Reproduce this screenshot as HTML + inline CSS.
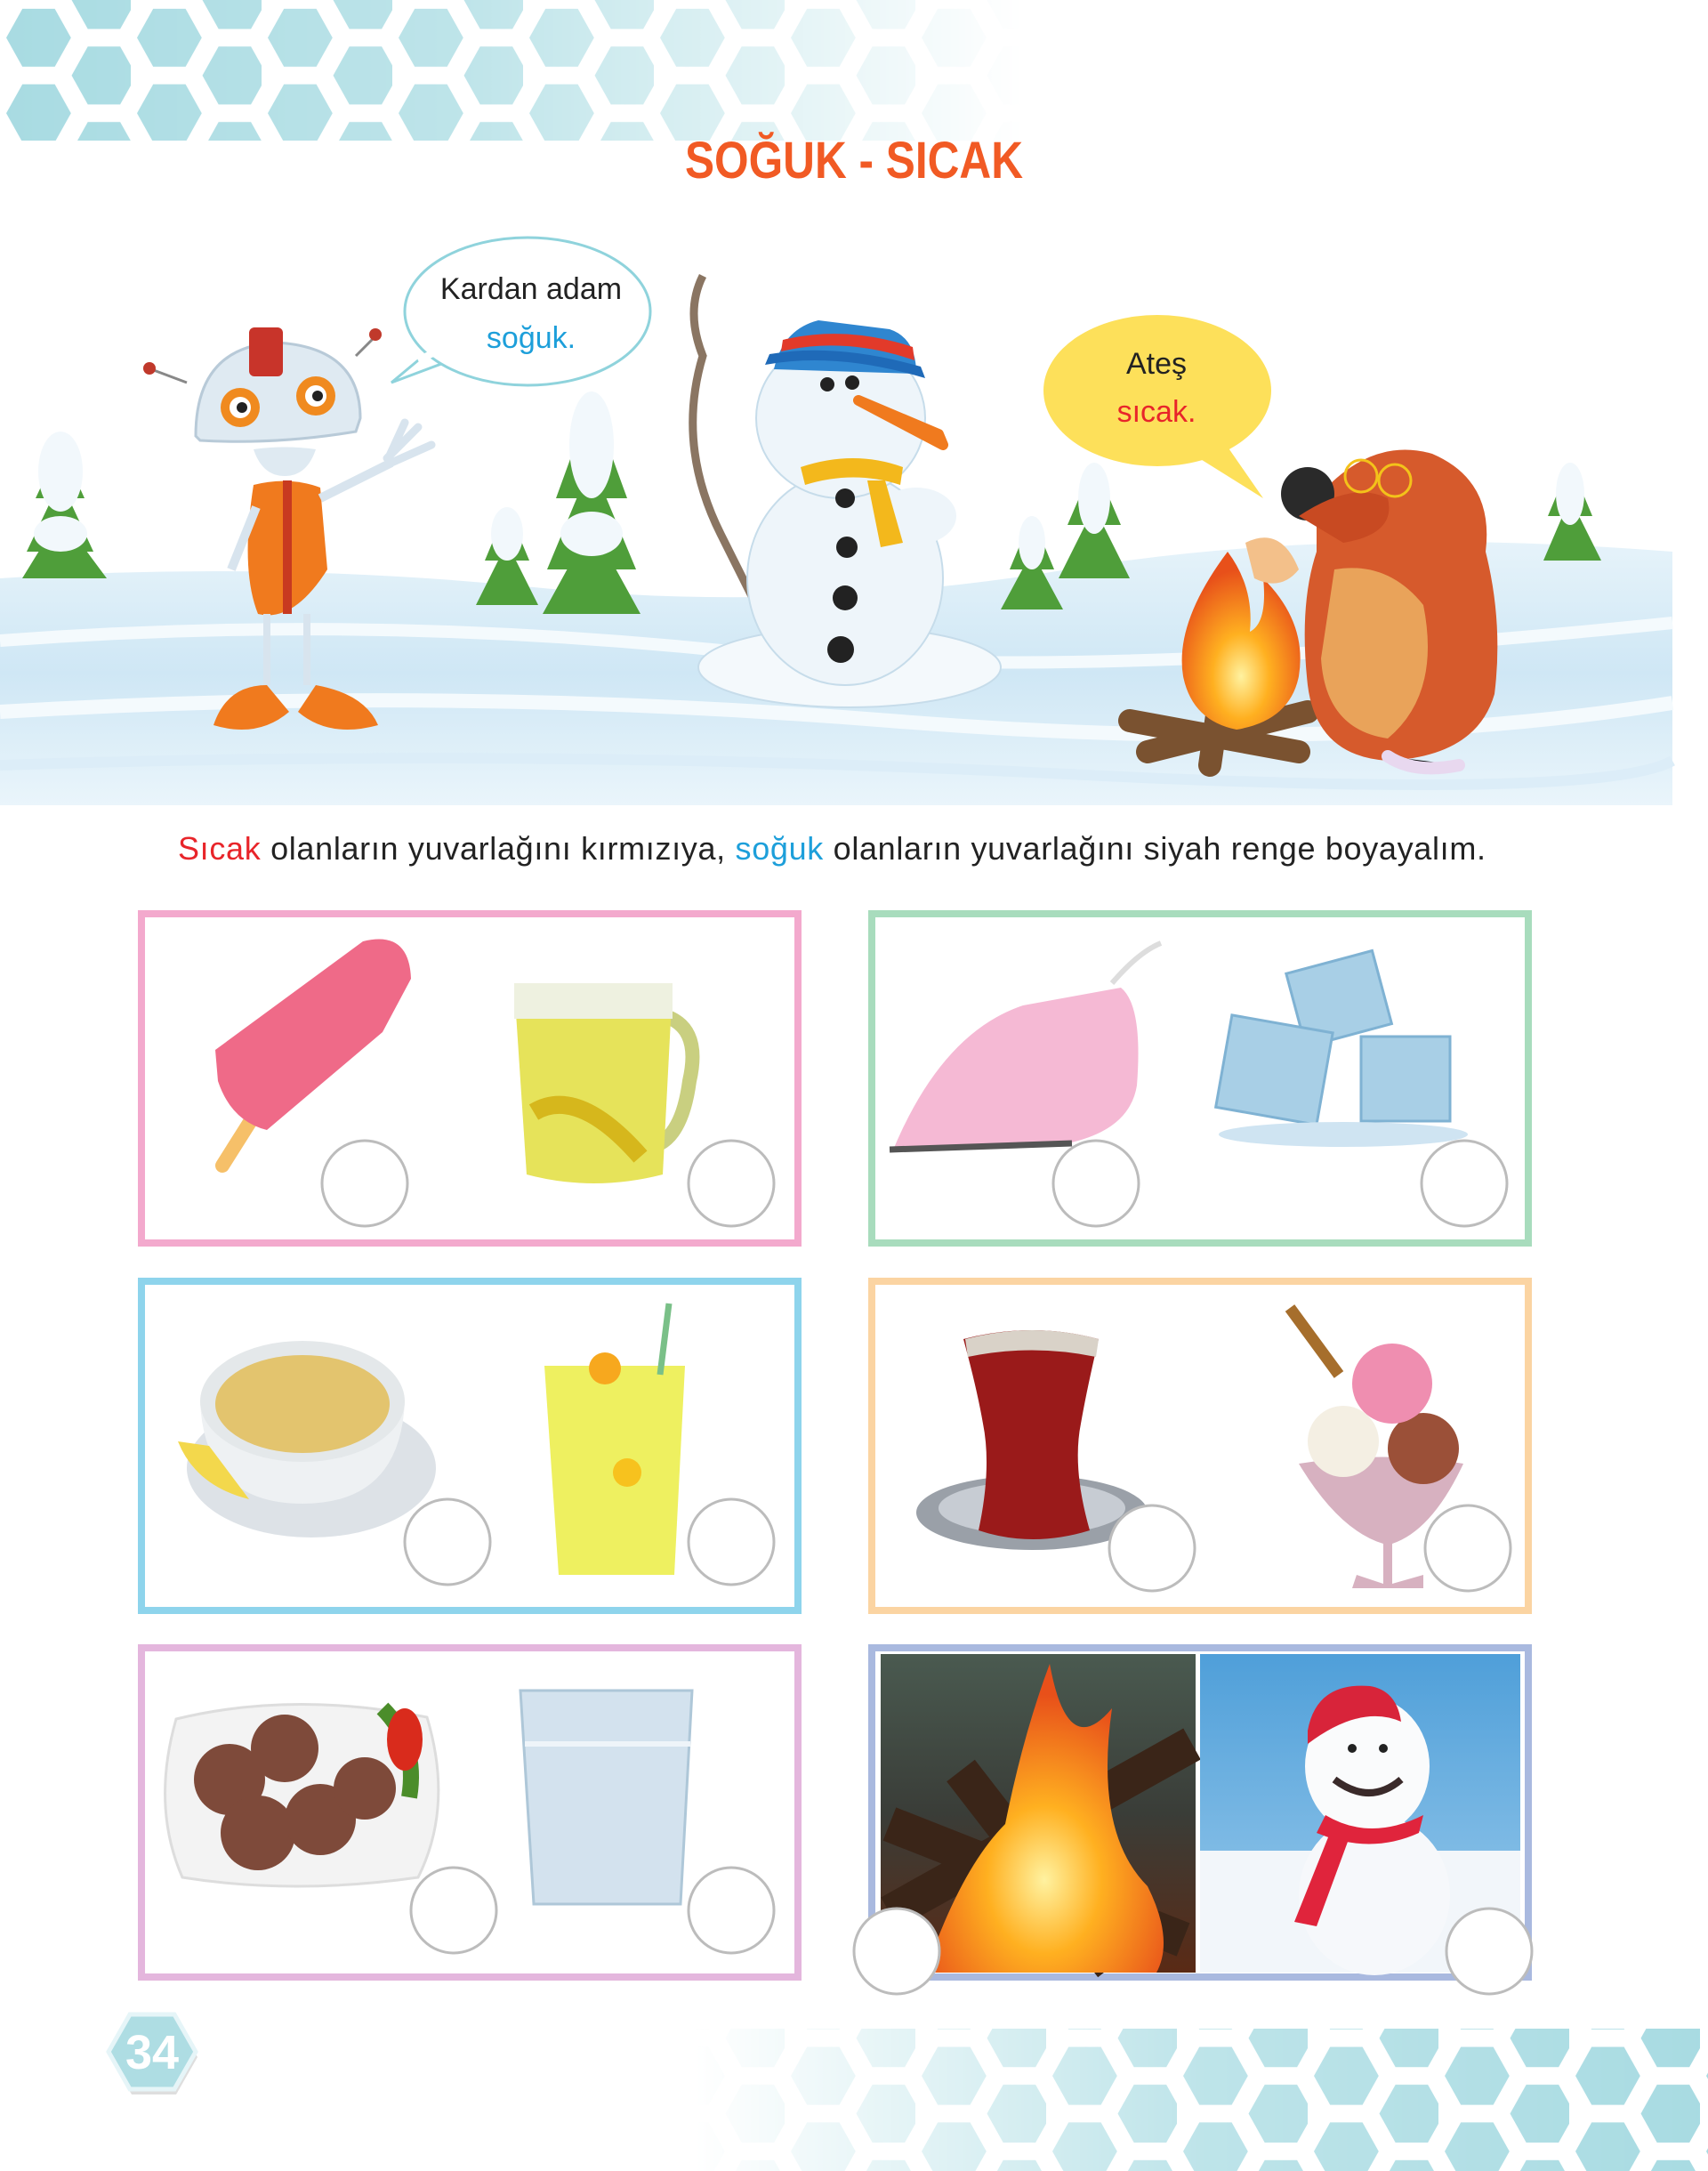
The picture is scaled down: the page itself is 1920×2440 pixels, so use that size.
<!DOCTYPE html>
<html><head><meta charset="utf-8"><style>
html,body{margin:0;padding:0;background:#fff}
body{width:1920px;height:2440px;position:relative;overflow:hidden}
svg{position:absolute;left:0;top:0}
</style></head><body>
<svg width="1920" height="2440" viewBox="0 0 1920 2440" xmlns="http://www.w3.org/2000/svg" font-family="'Liberation Sans', sans-serif">
<defs>
<pattern id="hex" width="105" height="60.6" patternUnits="userSpaceOnUse" patternTransform="scale(1.4)">
<g fill="#a8dbe2">
<polygon points="5,30.3 18,7 44,7 57,30.3 44,53.6 18,53.6"/>
<polygon points="57.5,0 70.5,-23.3 96.5,-23.3 109.5,0 96.5,23.3 70.5,23.3"/>
<polygon points="57.5,60.6 70.5,37.3 96.5,37.3 109.5,60.6 96.5,83.9 70.5,83.9"/>
</g>
</pattern>
<linearGradient id="fadeR" x1="0" x2="1" y1="0" y2="0"><stop offset="0" stop-color="#fff"/><stop offset="0.45" stop-color="#fff" stop-opacity="0.75"/><stop offset="1" stop-color="#fff" stop-opacity="0"/></linearGradient>
<linearGradient id="fadeL" x1="0" x2="1" y1="0" y2="0"><stop offset="0" stop-color="#fff" stop-opacity="0"/><stop offset="0.5" stop-color="#fff" stop-opacity="0.75"/><stop offset="1" stop-color="#fff"/></linearGradient>
<mask id="m1"><rect x="0" y="0" width="1150" height="158" fill="url(#fadeR)"/></mask>
<mask id="m2"><rect x="780" y="2280" width="1140" height="160" fill="url(#fadeL)"/></mask>
<linearGradient id="snow" x1="0" x2="0" y1="0" y2="1"><stop offset="0" stop-color="#e6f3fa"/><stop offset="0.5" stop-color="#cfe7f5"/><stop offset="1" stop-color="#eaf5fb"/></linearGradient>
<linearGradient id="sky" x1="0" x2="0" y1="0" y2="1"><stop offset="0" stop-color="#4f9fd9"/><stop offset="1" stop-color="#9bcbec"/></linearGradient>
<radialGradient id="flame" cx="0.5" cy="0.7" r="0.6"><stop offset="0" stop-color="#fff2a0"/><stop offset="0.4" stop-color="#ffb020"/><stop offset="1" stop-color="#e8501a"/></radialGradient>
<linearGradient id="firebg" x1="0" x2="0" y1="0" y2="1"><stop offset="0" stop-color="#4a5a50"/><stop offset="0.5" stop-color="#3a3d38"/><stop offset="1" stop-color="#5a2a15"/></linearGradient>
</defs>

<rect x="0" y="0" width="1150" height="158" fill="url(#hex)" mask="url(#m1)"/>
<rect x="780" y="2280" width="1140" height="160" fill="url(#hex)" mask="url(#m2)"/>

<text x="960" y="200" text-anchor="middle" font-size="58" font-weight="bold" fill="#f15a24" textLength="380" lengthAdjust="spacingAndGlyphs">SOĞUK - SICAK</text>

<path d="M0,650 Q300,630 600,660 T1200,640 T1880,620 L1880,905 L0,905 Z" fill="url(#snow)"/>
<path d="M0,720 Q400,690 800,730 T1880,700" stroke="#f4fafd" stroke-width="14" fill="none"/>
<path d="M0,800 Q500,770 1000,810 T1880,790" stroke="#f4fafd" stroke-width="16" fill="none"/>
<path d="M0,860 Q600,840 1200,870 T1880,855" stroke="#dcedf8" stroke-width="12" fill="none"/>
<g fill="#4f9e3a">
<path d="M68,500 L40,560 L95,560 Z M68,540 L30,620 L105,620 Z M68,580 L25,650 L120,650 Z"/>
<path d="M570,570 L545,630 L595,630 Z M570,610 L535,680 L605,680 Z"/>
<path d="M665,450 L625,560 L705,560 Z M665,520 L615,640 L715,640 Z M665,590 L610,690 L720,690 Z"/>
<path d="M1160,580 L1135,640 L1185,640 Z M1160,620 L1125,685 L1195,685 Z"/>
<path d="M1230,520 L1200,590 L1260,590 Z M1230,570 L1190,650 L1270,650 Z"/>
<path d="M1765,520 L1740,580 L1790,580 Z M1765,560 L1735,630 L1800,630 Z"/>
</g>
<g fill="#f2f8fc">
<ellipse cx="68" cy="530" rx="25" ry="45"/><ellipse cx="68" cy="600" rx="30" ry="20"/>
<ellipse cx="665" cy="500" rx="25" ry="60"/><ellipse cx="665" cy="600" rx="35" ry="25"/>
<ellipse cx="570" cy="600" rx="18" ry="30"/><ellipse cx="1230" cy="560" rx="18" ry="40"/>
<ellipse cx="1160" cy="610" rx="15" ry="30"/><ellipse cx="1765" cy="555" rx="16" ry="35"/>
</g>

<g>
<line x1="210" y1="430" x2="170" y2="415" stroke="#888" stroke-width="3"/><circle cx="168" cy="414" r="7" fill="#c0392b"/>
<line x1="400" y1="400" x2="420" y2="380" stroke="#888" stroke-width="3"/><circle cx="422" cy="376" r="7" fill="#c0392b"/>
<path d="M220,490 Q220,390 310,385 Q405,390 405,470 L400,485 Q310,500 225,495 Z" fill="#dfeaf2" stroke="#b8cad8" stroke-width="3"/>
<rect x="280" y="368" width="38" height="55" rx="6" fill="#c8342a"/>
<circle cx="270" cy="458" r="22" fill="#f08a1f"/><circle cx="270" cy="458" r="12" fill="#fff"/><circle cx="272" cy="458" r="6" fill="#222"/>
<circle cx="355" cy="445" r="22" fill="#f08a1f"/><circle cx="355" cy="445" r="12" fill="#fff"/><circle cx="357" cy="445" r="6" fill="#222"/>
<path d="M285,505 Q320,500 355,505 Q345,535 320,535 Q295,535 285,505 Z" fill="#dfeaf2"/>
<path d="M285,545 Q325,535 360,548 L368,640 Q330,700 290,690 Q270,640 285,545 Z" fill="#f07a1e"/>
<rect x="318" y="540" width="10" height="150" fill="#c83a20"/>
<line x1="360" y1="560" x2="440" y2="520" stroke="#d8e4ee" stroke-width="10"/>
<path d="M435,515 L470,480 M440,520 L485,500 M438,512 L455,475" stroke="#d8e4ee" stroke-width="9" stroke-linecap="round"/>
<line x1="288" y1="570" x2="260" y2="640" stroke="#d8e4ee" stroke-width="10"/>
<line x1="300" y1="690" x2="300" y2="770" stroke="#d8e4ee" stroke-width="8"/><line x1="345" y1="690" x2="345" y2="770" stroke="#d8e4ee" stroke-width="8"/>
<path d="M240,815 Q255,770 300,770 L325,800 Q290,830 240,815 Z" fill="#f07a1e"/>
<path d="M335,800 L355,770 Q410,780 425,815 Q370,830 335,800 Z" fill="#f07a1e"/>
</g>
<path d="M440,430 L520,400 L500,380 Z" fill="#fff" stroke="#8fd3dc" stroke-width="3"/>
<ellipse cx="593" cy="350" rx="138" ry="83" fill="#fff" stroke="#8fd3dc" stroke-width="3"/>
<path d="M470,405 L505,388" stroke="#fff" stroke-width="8"/>
<text x="597" y="336" text-anchor="middle" font-size="34" fill="#222">Kardan adam</text>
<text x="597" y="391" text-anchor="middle" font-size="34" fill="#1d9fda">soğuk.</text>

<g>
<path d="M790,310 Q770,350 790,400 Q760,500 810,600 L895,770" stroke="#8a7562" stroke-width="9" fill="none"/>
<ellipse cx="955" cy="750" rx="170" ry="45" fill="#f4f9fc" stroke="#c6dcea" stroke-width="2"/>
<ellipse cx="950" cy="650" rx="110" ry="120" fill="#eef5fa" stroke="#c6dcea" stroke-width="2"/>
<ellipse cx="945" cy="470" rx="95" ry="90" fill="#eef5fa" stroke="#c6dcea" stroke-width="2"/>
<ellipse cx="1030" cy="580" rx="45" ry="32" fill="#eef5fa"/>
<path d="M870,415 Q880,370 920,360 L1000,370 Q1030,380 1030,420 Z" fill="#2f86d0"/>
<path d="M860,410 Q940,395 1040,425 L1035,412 Q940,385 865,398 Z" fill="#1f6ab8"/>
<path d="M878,395 Q950,378 1028,405 L1026,390 Q950,365 880,382 Z" fill="#e23a2a"/>
<circle cx="930" cy="432" r="8" fill="#222"/><circle cx="958" cy="430" r="8" fill="#222"/>
<path d="M965,450 L1060,500 L1055,488 Z" fill="#f07a1e" stroke="#f07a1e" stroke-width="12" stroke-linejoin="round"/>
<path d="M900,525 Q960,505 1015,525 L1012,545 Q960,528 905,545 Z" fill="#f3b81c"/>
<path d="M975,540 L990,615 L1015,610 L995,540 Z" fill="#f3b81c"/>
<circle cx="950" cy="560" r="11" fill="#222"/><circle cx="952" cy="615" r="12" fill="#222"/><circle cx="950" cy="672" r="14" fill="#222"/><circle cx="945" cy="730" r="15" fill="#222"/>
</g>

<path d="M1340,510 L1420,560 L1375,495 Z" fill="#fde05a"/>
<ellipse cx="1301" cy="439" rx="128" ry="85" fill="#fde05a"/>
<text x="1300" y="420" text-anchor="middle" font-size="34" fill="#222">Ateş</text>
<text x="1300" y="474" text-anchor="middle" font-size="34" fill="#e8252a">sıcak.</text>

<g>
<path d="M1270,810 L1460,845 M1290,845 L1470,800 M1360,860 L1370,790" stroke="#7a5230" stroke-width="26" stroke-linecap="round"/>
<path d="M1380,620 Q1320,700 1330,760 Q1340,810 1390,820 Q1450,810 1460,760 Q1470,700 1420,650 Q1425,700 1405,710 Q1410,660 1380,620 Z" fill="url(#flame)"/>
</g>
<g>
<path d="M1480,560 Q1540,490 1610,510 Q1680,540 1670,620 Q1690,700 1680,780 Q1660,850 1560,855 Q1480,850 1470,770 Q1460,680 1480,620 Z" fill="#d65a2c"/>
<path d="M1500,640 Q1560,630 1600,680 Q1620,780 1560,830 Q1490,820 1485,740 Z" fill="#e9a35a"/>
<ellipse cx="1470" cy="555" rx="30" ry="30" fill="#2a2a2a"/>
<path d="M1460,580 Q1520,540 1560,560 Q1570,600 1510,610 Z" fill="#c84a22"/>
<circle cx="1530" cy="535" r="18" fill="none" stroke="#f3c21a" stroke-width="3"/><circle cx="1568" cy="540" r="18" fill="none" stroke="#f3c21a" stroke-width="3"/>
<path d="M1400,610 Q1440,590 1460,640 Q1440,665 1410,650 Z" fill="#f3c08a"/>
<path d="M1560,850 Q1590,870 1640,860" stroke="#e8d8ef" stroke-width="14" stroke-linecap="round"/>
</g>

<text x="200" y="966" font-size="36" fill="#222" textLength="1470" lengthAdjust="spacing"><tspan fill="#e8252a">Sıcak</tspan> olanların yuvarlağını kırmızıya,  <tspan fill="#1d9fda">soğuk</tspan> olanların yuvarlağını siyah renge boyayalım.</text>

<g fill="#fff" stroke-width="8">
<rect x="159" y="1027" width="738" height="370" stroke="#f3a9cd"/>
<rect x="980" y="1027" width="738" height="370" stroke="#a8dcbd"/>
<rect x="159" y="1440" width="738" height="370" stroke="#8ed4ec"/>
<rect x="980" y="1440" width="738" height="370" stroke="#fbd4a2"/>
<rect x="159" y="1852" width="738" height="370" stroke="#e4b6dd"/>
<rect x="980" y="1852" width="738" height="370" stroke="#a9b9df"/>
</g>

<path d="M250,1310 L310,1215" stroke="#f6c069" stroke-width="16" stroke-linecap="round"/>
<path d="M242,1180 L408,1058 Q460,1045 462,1100 L430,1160 L300,1270 Q260,1260 245,1215 Z" fill="#ef6a88"/>
<path d="M740,1140 Q790,1150 775,1215 Q765,1290 722,1290" stroke="#c9cf80" stroke-width="16" fill="none"/>
<path d="M578,1108 L756,1108 L745,1320 Q667,1340 592,1320 Z" fill="#e6e35a"/>
<rect x="578" y="1105" width="178" height="40" fill="#eef1e0"/>
<path d="M600,1250 Q650,1220 720,1300" stroke="#d6b71c" stroke-width="20" fill="none"/>
<path d="M1005,1290 Q1060,1160 1150,1130 L1260,1110 Q1285,1130 1278,1220 Q1270,1270 1200,1285 Z" fill="#f5b9d4"/>
<path d="M1000,1292 L1205,1285" stroke="#555" stroke-width="7"/>
<path d="M1250,1105 Q1280,1070 1305,1060" stroke="#ddd" stroke-width="6" fill="none"/>
<g fill="#a8cfe6" stroke="#7fb2d3" stroke-width="3">
<rect x="1455" y="1080" width="100" height="85" transform="rotate(-15 1505 1122)"/>
<rect x="1375" y="1150" width="115" height="105" transform="rotate(10 1432 1202)"/>
<rect x="1530" y="1165" width="100" height="95"/>
</g>
<ellipse cx="1510" cy="1275" rx="140" ry="14" fill="#cfe4f2"/>
<ellipse cx="350" cy="1650" rx="140" ry="78" fill="#dde2e7"/>
<path d="M225,1575 Q230,1690 340,1690 Q450,1690 455,1575 Z" fill="#eef1f3"/>
<ellipse cx="340" cy="1575" rx="115" ry="68" fill="#e4e8ea"/>
<ellipse cx="340" cy="1578" rx="98" ry="55" fill="#e3c46e"/>
<path d="M200,1620 Q220,1670 280,1685 L235,1625 Z" fill="#f3d84c"/>
<path d="M612,1535 L770,1535 L758,1770 L628,1770 Z" fill="#eef060"/>
<line x1="752" y1="1465" x2="742" y2="1545" stroke="#7ac088" stroke-width="7"/>
<circle cx="680" cy="1538" r="18" fill="#f7a81e"/><circle cx="705" cy="1655" r="16" fill="#f7c21e"/>
<ellipse cx="1160" cy="1700" rx="130" ry="42" fill="#9aa0a8"/>
<ellipse cx="1160" cy="1695" rx="105" ry="30" fill="#c7ccd3"/>
<path d="M1083,1505 Q1160,1485 1235,1505 Q1222,1560 1215,1600 Q1205,1650 1225,1720 Q1160,1740 1100,1720 Q1115,1650 1105,1600 Q1098,1560 1083,1505 Z" fill="#9a1a1a"/>
<path d="M1085,1505 Q1160,1485 1235,1505 L1232,1525 Q1160,1510 1088,1525 Z" fill="#d9d2c8"/>
<path d="M1460,1645 Q1555,1630 1645,1645 Q1610,1720 1565,1735 L1565,1780 L1600,1770 L1600,1785 L1520,1785 L1525,1770 L1555,1780 L1555,1735 Q1505,1720 1460,1645 Z" fill="#d7b1c0"/>
<circle cx="1510" cy="1620" r="40" fill="#f4efe3"/><circle cx="1600" cy="1628" r="40" fill="#9b5038"/>
<circle cx="1565" cy="1555" r="45" fill="#ef8eb0"/>
<line x1="1450" y1="1470" x2="1505" y2="1545" stroke="#a66e2c" stroke-width="13"/>
<path d="M198,1932 Q330,1900 480,1930 Q510,2030 470,2110 Q330,2130 205,2110 Q170,2030 198,1932 Z" fill="#f3f3f3" stroke="#ddd" stroke-width="3"/>
<g fill="#7e4a3a"><circle cx="258" cy="2000" r="40"/><circle cx="320" cy="1965" r="38"/><circle cx="290" cy="2060" r="42"/><circle cx="360" cy="2045" r="40"/><circle cx="410" cy="2010" r="35"/></g>
<path d="M430,1920 Q470,1960 460,2020" stroke="#4b8d2a" stroke-width="18" fill="none"/>
<ellipse cx="455" cy="1955" rx="20" ry="35" fill="#d92b1c"/>
<path d="M585,1900 L778,1900 L765,2140 L600,2140 Z" fill="#d3e2ee" stroke="#aec7d8" stroke-width="3"/>
<path d="M590,1960 L776,1960" stroke="#eef4f9" stroke-width="6"/>
<rect x="990" y="1859" width="354" height="358" fill="url(#firebg)"/>
<path d="M1000,2150 L1340,1960 M1000,2050 L1330,2180 M1080,1990 L1250,2210" stroke="#3a2518" stroke-width="40"/>
<path d="M1040,2217 Q1080,2100 1130,2050 Q1150,1950 1180,1870 Q1200,1980 1250,1920 Q1230,2060 1290,2120 Q1320,2180 1300,2217 Z" fill="url(#flame)"/>
<rect x="1349" y="1859" width="360" height="358" fill="url(#sky)"/>
<rect x="1349" y="2080" width="360" height="137" fill="#f2f6fa"/>
<ellipse cx="1545" cy="2130" rx="85" ry="90" fill="#f6f8fb"/>
<ellipse cx="1537" cy="1985" rx="70" ry="78" fill="#fafbfc"/>
<path d="M1470,1945 Q1480,1890 1540,1895 Q1570,1900 1575,1935 Q1530,1915 1470,1960 Z" fill="#d8243a"/>
<path d="M1490,2040 Q1540,2070 1600,2040 L1595,2060 Q1540,2085 1480,2060 Z" fill="#e0243c"/>
<path d="M1495,2060 L1455,2160 L1480,2165 L1515,2070 Z" fill="#e0243c"/>
<path d="M1500,2000 Q1540,2030 1575,2000" stroke="#3a2a2a" stroke-width="8" fill="none"/>
<circle cx="1520" cy="1965" r="5" fill="#222"/><circle cx="1555" cy="1965" r="5" fill="#222"/>

<g fill="#fff" stroke="#bcbcbc" stroke-width="3">
<ellipse cx="410" cy="1330" rx="48" ry="48"/><ellipse cx="822" cy="1330" rx="48" ry="48"/>
<ellipse cx="1232" cy="1330" rx="48" ry="48"/><ellipse cx="1646" cy="1330" rx="48" ry="48"/>
<ellipse cx="503" cy="1733" rx="48" ry="48"/><ellipse cx="822" cy="1733" rx="48" ry="48"/>
<ellipse cx="1295" cy="1740" rx="48" ry="48"/><ellipse cx="1650" cy="1740" rx="48" ry="48"/>
<ellipse cx="510" cy="2147" rx="48" ry="48"/><ellipse cx="822" cy="2147" rx="48" ry="48"/>
<ellipse cx="1008" cy="2193" rx="48" ry="48"/><ellipse cx="1674" cy="2193" rx="48" ry="48"/>
</g>

<polygon points="124,2312 148,2270 198,2270 222,2312 198,2354 148,2354" fill="#c8c8c8" opacity="0.6"/>
<polygon points="122,2306 146,2264 196,2264 220,2306 196,2348 146,2348" fill="#aedde3" stroke="#e6f5f8" stroke-width="5"/>
<text x="171" y="2325" text-anchor="middle" font-size="54" font-weight="bold" fill="#fff">34</text>
</svg>
</body></html>
